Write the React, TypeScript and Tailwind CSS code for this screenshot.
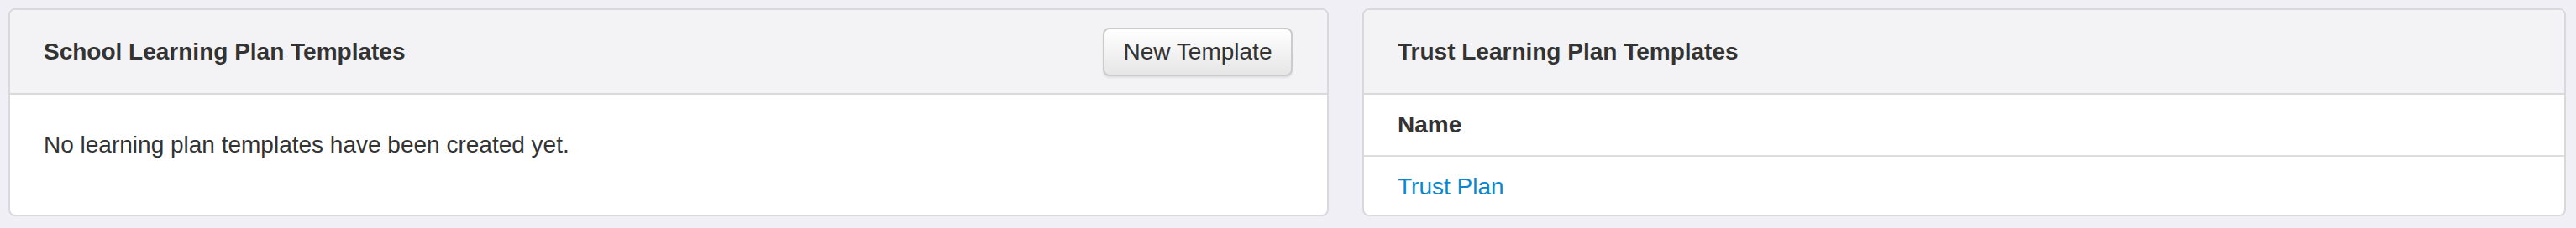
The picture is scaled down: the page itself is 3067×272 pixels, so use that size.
export default function App() {
  return (
    <div
      className="flex h-[272px] w-full items-start gap-[40px] bg-[#efeff5] pl-[10px] pr-[12px] pt-[10px] text-[28px] text-[#333333]"
      style={{ fontFamily: '"Liberation Sans", Arial, sans-serif' }}
    >
      <SchoolTemplates />
      <TrustTemplates />
    </div>
  );
}

function SchoolTemplates() {
  return (
    <section className="flex h-[248px] w-[1572px] shrink-0 flex-col overflow-hidden rounded-[8px] border-2 border-[#d9d9dc] bg-white">
      <div className="flex h-[101px] shrink-0 items-center justify-between border-b-2 border-[#d9d9dc] bg-[#f3f3f5] pl-[40px] pr-[41px]">
        <h2 className="text-[28px] font-bold leading-[40px]">School Learning Plan Templates</h2>
        <button
          type="button"
          className="flex h-[58px] w-[226px] items-center justify-center rounded-[8px] border-2 border-[#cbcbcb] bg-gradient-to-b from-white to-[#e6e6e6] text-[28px] leading-[40px] text-[#333333] shadow-[0_2px_2px_rgba(0,0,0,0.08)]"
        >
          New Template
        </button>
      </div>
      <div className="flex-1 px-[40px] pt-[40px]">
        <p className="leading-[40px]">No learning plan templates have been created yet.</p>
      </div>
    </section>
  );
}

function TrustTemplates() {
  return (
    <section className="flex h-[248px] flex-1 flex-col overflow-hidden rounded-[8px] border-2 border-[#d9d9dc] bg-white">
      <div className="flex h-[101px] shrink-0 items-center border-b-2 border-[#d9d9dc] bg-[#f3f3f5] px-[40px]">
        <h2 className="text-[28px] font-bold leading-[40px]">Trust Learning Plan Templates</h2>
      </div>
      <div className="border-b-2 border-[#dddddd] px-[40px] py-[16px] font-bold leading-[40px]">Name</div>
      <div className="flex-1 px-[40px] py-[16px] leading-[40px]">
        <a href="#" className="text-[#0a88cf]">
          Trust Plan
        </a>
      </div>
    </section>
  );
}
